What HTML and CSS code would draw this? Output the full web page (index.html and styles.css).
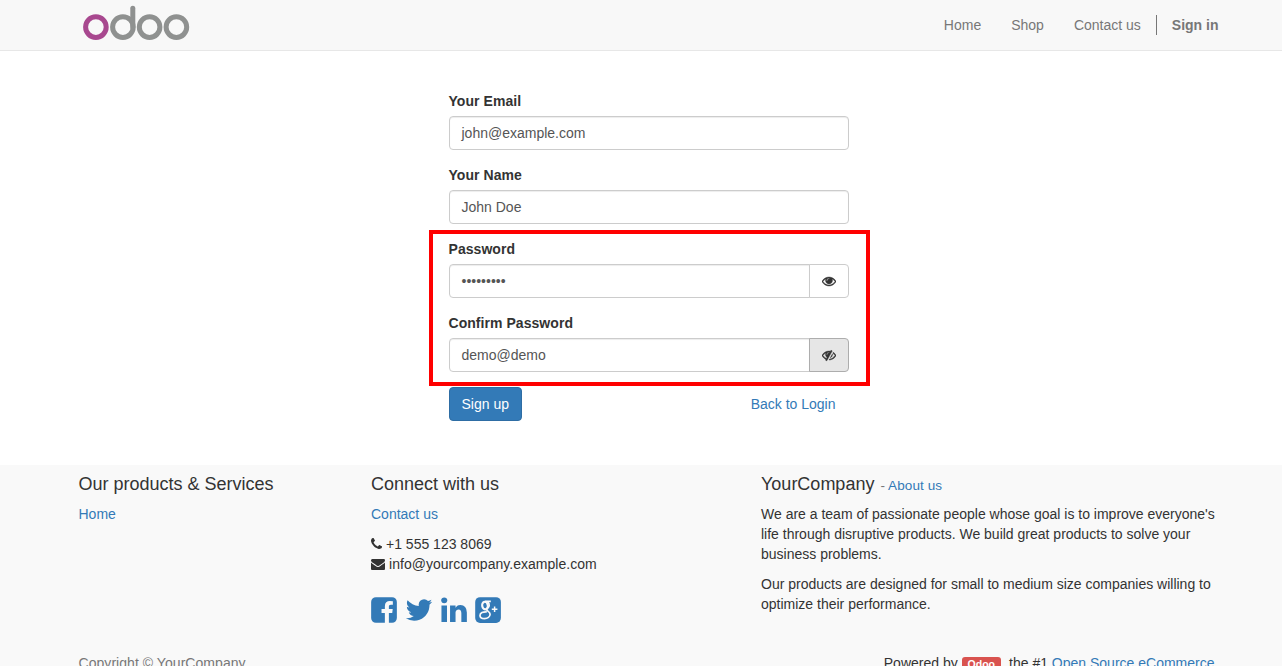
FILE: index.html
```html
<!DOCTYPE html>
<html lang="en">
<head>
<meta charset="utf-8">
<title>Sign up | Odoo</title>
<link rel="stylesheet" href="styles.css">
</head>
<body>
<div class="page">
<header class="navbar">
  <div class="container navbar-inner">
    <a class="brand" href="#">
      <svg class="logo" width="112" height="44" viewBox="80 0 112 44" fill="none" stroke="#8f9190" stroke-width="5">
        <circle cx="95.9" cy="27.1" r="10.3" stroke="#a8488f"/>
        <circle cx="122.9" cy="27.1" r="10.3"/>
        <path d="M132.8 27V8.2" stroke-linecap="round"/>
        <circle cx="149.6" cy="27.1" r="10.3"/>
        <circle cx="176.4" cy="27.1" r="10.3"/>
      </svg>
    </a>
    <nav class="menu">
      <a href="#">Home</a><a href="#">Shop</a><a href="#">Contact us</a><span class="divider"></span><a class="signin" href="#">Sign in</a>
    </nav>
  </div>
</header>
<main class="main">
  <form class="signup">
    <div class="field"><label>Your Email</label><div class="control">john@example.com</div></div>
    <div class="field"><label>Your Name</label><div class="control">John Doe</div></div>
    <div class="field"><label>Password</label>
      <div class="group"><div class="control">•••••••••</div><span class="toggle"><svg width="14" height="14" viewBox="0 0 1792 1792"><path d="M1664 960q-152-236-381-353 61 104 61 225 0 185-131.5 316.5t-316.5 131.5-316.5-131.5-131.5-316.5q0-121 61-225-229 117-381 353 133 205 333.5 326.5t434.5 121.5 434.5-121.5 333.5-326.5zm-720-384q0-20-14-34t-34-14q-125 0-214.5 89.5t-89.5 214.5q0 20 14 34t34 14 34-14 14-34q0-86 61-147t147-61q20 0 34-14t14-34zm848 384q0 34-20 69-140 230-376.5 368.5t-499.5 138.5-499.5-139-376.5-368q-20-35-20-69t20-69q140-229 376.5-368t499.5-139 499.5 139 376.5 368q20 35 20 69z"/></svg></span></div>
    </div>
    <div class="field"><label>Confirm Password</label>
      <div class="group"><div class="control">demo@demo</div><span class="toggle active"><svg width="14" height="14" viewBox="0 0 1792 1792"><path d="M555 1335l78-141q-87-63-136-159t-49-203q0-121 61-225-229 117-381 353 167 258 427 375zm389-759q0-20-14-34t-34-14q-125 0-214.5 89.5t-89.5 214.5q0 20 14 34t34 14 34-14 14-34q0-86 61-147t147-61q20 0 34-14t14-34zm363-191q0 7-1 9-106 189-316 567t-315 566l-49 89q-10 16-28 16-12 0-134-70-16-10-16-28 0-12 44-87-143-65-263.5-173t-208.5-245q-20-31-20-69t20-69q153-235 380-371t496-136q89 0 180 17l54-97q10-16 28-16 5 0 18 6t31 15.5 33 18.5 31.5 18.5 19.5 11.5q16 10 16 27zm37 447q0 139-79 253.5t-209 164.5l280-502q8 45 8 84zm448 128q0 35-20 69-39 64-109 145-150 172-347.5 267t-419.5 95l74-132q212-18 392.5-137t301.5-307q-115-179-282-294l63-112q95 64 182.5 153t144.5 184q20 34 20 69z"/></svg></span></div>
    </div>
    <div class="actions"><span class="btn">Sign up</span><a class="btn-link" href="#">Back to Login</a></div>
    <div class="highlight"></div>
  </form>
</main>
<footer class="footer">
  <div class="container columns">
    <section>
      <h4>Our products &amp; Services</h4>
      <p><a href="#">Home</a></p>
    </section>
    <section>
      <h4>Connect with us</h4>
      <p><a href="#">Contact us</a></p>
      <ul class="contact">
        <li><svg width="11" height="14" viewBox="192 0 1408 1792"><path d="M1600 1240q0 27-10 70.5t-21 68.5q-21 50-122 106-94 51-186 51-27 0-53-3.5t-57.5-12.5-47-14.5-55.5-20.5-49-18q-98-35-175-83-127-79-264-216t-216-264q-48-77-83-175-3-9-18-49t-20.5-55.5-14.5-47-12.5-57.5-3.5-53q0-92 51-186 56-101 106-122 25-11 68.5-21t70.5-10q14 0 21 3 18 6 53 76 11 19 30 54t35 63.5 31 53.5q3 4 17.5 25t21.5 35.5 7 28.5q0 20-28.5 50t-62 55-62 53-28.5 46q0 9 5 22.5t8.5 20.5 14 24 11.5 19q76 137 174 235t235 174q2 1 19 11.5t24 14 20.5 8.5 22.5 5q18 0 46-28.5t53-62 55-62 50-28.5q14 0 28.5 7t35.5 21.5 25 17.5q25 15 53.5 31t63.5 35 54 30q70 35 76 53 3 7 3 21z"/></svg><span>+1 555 123 8069</span></li>
        <li class="email"><svg width="14" height="14" viewBox="0 0 1792 1792"><path d="M1792 710v794q0 66-47 113t-113 47h-1472q-66 0-113-47t-47-113v-794q44 49 101 87 362 246 497 345 57 42 92.5 65.5t94.5 48 110 24.5h2q51 0 110-24.5t94.5-48 92.5-65.5q170-123 498-345 57-39 100-87zm0-294q0 79-49 151t-122 123q-376 261-468 325-10 7-42.5 31t-54 38.5-52 32.5-57.5 27-50 9h-2q-23 0-50-9t-57.5-27-52-32.5-54-38.5-42.5-31q-91-64-262-182.5t-205-142.5q-62-42-117-115.5t-55-136.5q0-78 41.5-130t118.5-52h1472q65 0 112.5 47t47.5 113z"/></svg><span>info@yourcompany.example.com</span></li>
      </ul>
      <div class="social">
        <svg class="facebook" width="30" height="30" viewBox="0 0 1792 1792"><path d="M1376 128q119 0 203.5 84.5t84.5 203.5v960q0 119-84.5 203.5t-203.5 84.5h-188v-595h199l30-232h-229v-148q0-56 23.5-84t91.5-28l122-1v-207q-63-9-178-9-136 0-217.5 80t-81.5 226v171h-200v232h200v595h-532q-119 0-203.5-84.5t-84.5-203.5v-960q0-119 84.5-203.5t203.5-84.5h960z"/></svg>
        <svg class="twitter" width="30" height="30" viewBox="0 0 1792 1792"><path d="M1684 408q-67 98-162 167 1 14 1 42 0 130-38 259.5t-115.5 248.5-184.5 210.5-258 146-323 54.5q-271 0-496-145 35 4 78 4 225 0 401-138-105-2-188-64.5t-114-159.5q33 5 61 5 43 0 85-11-112-23-185.5-111.5t-73.5-205.5v-4q68 38 146 41-66-44-105-115t-39-154q0-88 44-163 121 149 294.5 238.5t371.5 99.5q-8-38-8-74 0-134 94.5-228.5t228.5-94.5q140 0 236 102 109-21 205-78-37 115-142 178 93-10 186-50z"/></svg>
        <svg width="30" height="30" viewBox="0 0 1792 1792"><path d="M477 625v991h-330v-991h330zm21-306q1 73-50.5 122t-135.5 49h-2q-82 0-132-49t-50-122q0-74 51.5-122.5t134.5-48.5 133 48.5 51 122.5zm1166 729v568h-329v-530q0-105-40.5-164.5t-126.5-59.5q-63 0-105.5 34.5t-63.5 85.5q-11 30-11 81v553h-329q2-399 2-647t-1-296l-1-48h329v144h-2q20-32 41-56t56.5-52 87-43.5 114.5-15.5q171 0 275 113.5t104 332.5z"/></svg>
        <svg width="30" height="30" viewBox="0 0 30 30"><rect x="2.2" y="2.2" width="25.7" height="25.7" rx="4.8"/><g fill="none" stroke="#f9f9f9"><ellipse cx="12" cy="10.6" rx="2.8" ry="3.8" stroke-width="2.1" transform="rotate(-12 12 10.6)"/><path d="M12 6.4h5.8M14.6 7q1.8 1.5 1.6 3.6c-.2 2.3-3 2.6-2.6 4.2.3 1.2 3.6 2 3.5 4.5-.1 2.6-2.6 4.3-5.5 4.3-3.1 0-4.6-1.4-4.6-3.2 0-2.6 2.9-3.8 6.8-3.6" stroke-width="1.7"/><path d="M18.8 14.2h5.6M21.6 11.4v5.6" stroke-width="1.5"/></g></svg>
      </div>
    </section>
    <section>
      <h4>YourCompany <small>- <a href="#">About us</a></small></h4>
      <p>We are a team of passionate people whose goal is to improve everyone's life through disruptive products. We build great products to solve your business problems.</p>
      <p>Our products are designed for small to medium size companies willing to optimize their performance.</p>
    </section>
  </div>
  <div class="container bottom">
    <span class="muted">Copyright © YourCompany</span>
    <span class="powered">Powered by <a class="badge" href="#">Odoo</a><span class="tagline">the #1 <a href="#">Open Source eCommerce</a></span></span>
  </div>
</footer>
</div>
</body>
</html>
```
FILE: styles.css
```css
* { box-sizing: border-box; }
html { height: 100%; overflow: hidden; }
body {
  margin: 0;
  height: 100%;
  overflow: hidden;
  font: 14px/20px "Liberation Sans", Arial, sans-serif;
  color: #333;
  background: #fff;
}
a { color: #337ab7; text-decoration: none; }
svg { display: block; flex: none; }
.page { width: 1297px; }
.container { width: 1170px; margin: 0 auto; padding: 0 15px; }

.navbar { height: 51px; background: #f8f8f8; border-bottom: 1px solid #e7e7e7; }
.navbar-inner { display: flex; justify-content: space-between; padding-right: 0; }
.brand { padding-left: 1px; }
.menu { display: flex; align-items: center; height: 50px; }
.menu a { padding: 15px; color: #777; }
.menu .divider { width: 1px; height: 20px; background: #777; }
.menu .signin { font-weight: bold; }

.main { height: 414px; padding-top: 40px; }
.signup { position: relative; width: 400px; margin: 0 auto; }
.field { margin-bottom: 15px; }
.field label { display: block; margin-bottom: 5px; font-weight: bold; letter-spacing: .05px; }
.control {
  flex: 1;
  height: 34px;
  padding: 6px 12px;
  color: #555;
  background: #fff;
  border: 1px solid #ccc;
  border-radius: 4px;
  box-shadow: inset 0 1px 1px rgba(0, 0, 0, .075);
}
.group { display: flex; }
.group .control { border-radius: 4px 0 0 4px; }
.toggle {
  display: flex;
  align-items: center;
  justify-content: center;
  width: 40px;
  height: 34px;
  margin-left: -1px;
  border: 1px solid #ccc;
  border-radius: 0 4px 4px 0;
  fill: #333;
  stroke: #333;
  stroke-width: 50;
}
.toggle.active { background: #e6e6e6; border-color: #adadad; }
.actions { display: flex; justify-content: space-between; }
.btn, .btn-link { padding: 6px 12px; border: 1px solid transparent; border-radius: 4px; }
.btn { color: #fff; background: #337ab7; border-color: #2e6da4; }
.highlight {
  position: absolute;
  left: -19.5px;
  top: 139px;
  width: 441px;
  height: 156px;
  border: 4px solid #f00;
}

.footer { height: 220px; padding-top: 9px; background: #f9f9f9; }
.columns { display: grid; grid-template-columns: 292.5px 390px 457.5px; height: 179px; }
h4 { height: 20px; margin: 0 0 10px; font-size: 18px; font-weight: normal; line-height: 21px; }
h4 small { margin-left: 1px; font-size: 13.5px; line-height: 1; letter-spacing: .1px; color: #777; }
p { margin: 0 0 10px; }
.contact { margin: 0; padding: 0; list-style: none; }
.contact li { display: flex; align-items: center; gap: 4px; fill: #333; }
.contact .email { letter-spacing: .03px; }
.social { display: flex; gap: 4px; margin: 21px 0 0 -2px; fill: #337ab7; }
.social .facebook, .social .twitter { margin-right: 1px; }
.bottom { display: flex; justify-content: space-between; padding-right: 19px; }
.muted { color: #777; letter-spacing: .05px; }
.badge {
  display: inline-block;
  padding: 2px 6px 3px;
  font-size: 10.5px;
  line-height: 11px;
  font-weight: bold;
  color: #fff;
  background: #d9534f;
  border-radius: 3px;
}
.tagline { margin-left: 8px; }
```
